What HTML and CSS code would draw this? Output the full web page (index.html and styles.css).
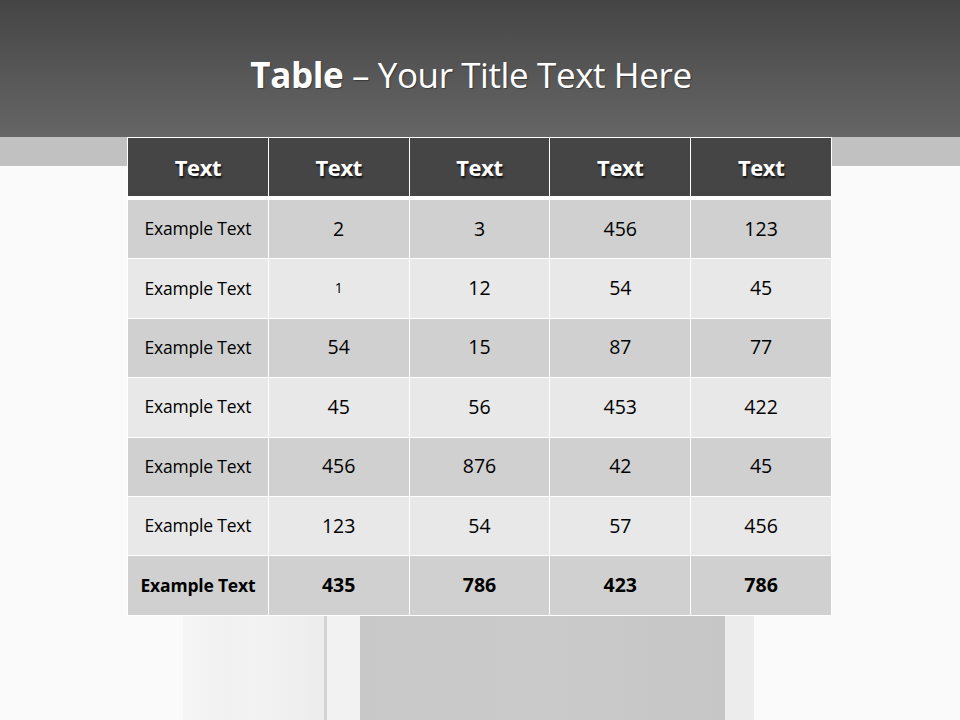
FILE: index.html
```html
<!DOCTYPE html>
<html>
<head>
<meta charset="utf-8">
<link rel="stylesheet" href="styles.css">
</head>
<body>
<div class="slide">
  <header class="header">
    <h1 class="title"><b>Table</b> – Your Title Text Here</h1>
  </header>
  <main class="stage">
    <table class="data">
      <thead>
        <tr><th>Text</th><th>Text</th><th>Text</th><th>Text</th><th>Text</th></tr>
      </thead>
      <tbody>
        <tr class="odd"><td class="label">Example Text</td><td>2</td><td>3</td><td>456</td><td>123</td></tr>
        <tr class="even"><td class="label">Example Text</td><td class="small">1</td><td>12</td><td>54</td><td>45</td></tr>
        <tr class="odd"><td class="label">Example Text</td><td>54</td><td>15</td><td>87</td><td>77</td></tr>
        <tr class="even"><td class="label">Example Text</td><td>45</td><td>56</td><td>453</td><td>422</td></tr>
        <tr class="odd"><td class="label">Example Text</td><td>456</td><td>876</td><td>42</td><td>45</td></tr>
        <tr class="even"><td class="label">Example Text</td><td>123</td><td>54</td><td>57</td><td>456</td></tr>
        <tr class="odd total"><td class="label">Example Text</td><td>435</td><td>786</td><td>423</td><td>786</td></tr>
      </tbody>
    </table>
    <div class="deco">
      <div class="deco-left"></div>
      <div class="deco-line"></div>
      <div class="deco-gap"></div>
      <div class="deco-panel"></div>
      <div class="deco-strip"></div>
    </div>
  </main>
</div>
</body>
</html>
```

FILE: styles.css
```css
html, body {
  margin: 0;
  padding: 0;
  background: #fafafa;
}
.slide {
  width: 960px;
  height: 720px;
  overflow: hidden;
  font-family: "Open Sans", sans-serif;
}
.header {
  height: 137px;
  background: linear-gradient(#454545, #666666);
  display: flex;
  justify-content: center;
  align-items: center;
}
.title {
  margin: 0 0 0 -18px;
  padding-top: 12px;
  color: #fff;
  font-family: "Open Sans", sans-serif;
  font-weight: 400;
  font-size: 35px;
  letter-spacing: -0.4px;
  text-shadow: 1px 1px 1px rgba(0,0,0,0.35);
}
.title b {
  font-weight: 700;
}
.stage {
  height: 583px;
  background: linear-gradient(#c1c1c1 0, #c1c1c1 29px, #fafafa 29px);
  display: flex;
  flex-direction: column;
}
.data {
  margin-left: 127px;
  width: 705px;
  border-collapse: collapse;
  table-layout: fixed;
  color: #000;
}
.data th, .data td {
  border: 1px solid #ffffff;
  text-align: center;
  padding: 0;
}
.data th {
  background: #454545;
  color: #fff;
  font-weight: 700;
  font-size: 22px;
  height: 58px;
  border-bottom: 4px solid #fff;
  text-shadow: 1px 2px 2px rgba(0,0,0,0.8);
  letter-spacing: -0.4px;
}
.data td {
  height: 56.4px;
  font-size: 19.5px;
  padding-bottom: 2px;
}
.data tr.odd td { background: #d0d0d0; }
.data tr.even td { background: #e8e8e8; }
.data td.label {
  font-size: 17.5px;
  letter-spacing: -0.2px;
}
.data td.small {
  font-size: 14px;
}
.data tr.total td {
  font-weight: 700;
}
.deco {
  flex: 1;
  display: flex;
  margin-left: 183px;
}
.deco-left {
  width: 141px;
  background: linear-gradient(90deg, #f5f5f5 0%, #f1f1f1 30%, #f3f3f3 50%, #ececec 100%);
}
.deco-line {
  width: 3px;
  background: #d2d2d2;
}
.deco-gap {
  width: 33px;
  background: #f2f2f2;
}
.deco-panel {
  width: 365px;
  background: linear-gradient(90deg, #c8c8c8, #cacaca 50%, #c6c6c6);
}
.deco-strip {
  width: 29px;
  background: #ececec;
}
```
